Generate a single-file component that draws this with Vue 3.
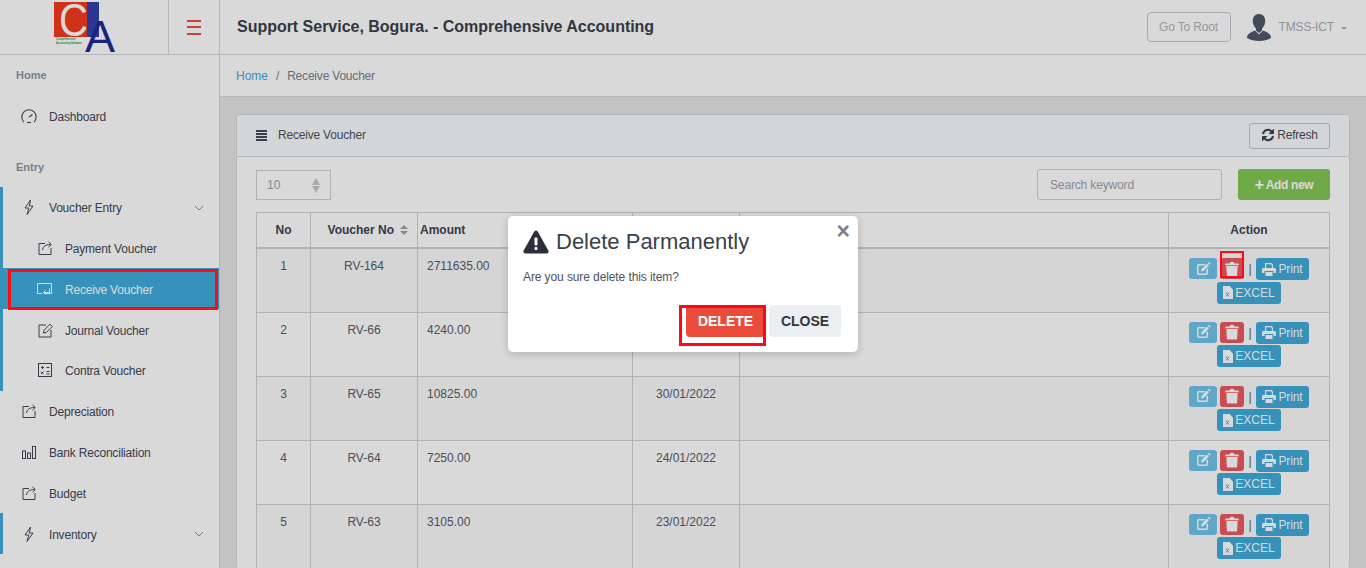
<script setup>
const menu = [
  { label: 'Voucher Entry', icon: 'bolt', parent: true, bar: true, chevron: true },
  { label: 'Payment Voucher', icon: 'share', sub: true, bar: true },
  { label: 'Receive Voucher', icon: 'reply', sub: true, bar: true, active: true },
  { label: 'Journal Voucher', icon: 'edit', sub: true, bar: true },
  { label: 'Contra Voucher', icon: 'calc', sub: true, bar: true },
  { label: 'Depreciation', icon: 'share' },
  { label: 'Bank Reconciliation', icon: 'bars' },
  { label: 'Budget', icon: 'share' },
  { label: 'Inventory', icon: 'bolt', bar: true, chevron: true }
]
const rows = [
  { no: 1, voucher: 'RV-164', amount: '2711635.00', date: '' },
  { no: 2, voucher: 'RV-66', amount: '4240.00', date: '' },
  { no: 3, voucher: 'RV-65', amount: '10825.00', date: '30/01/2022' },
  { no: 4, voucher: 'RV-64', amount: '7250.00', date: '24/01/2022' },
  { no: 5, voucher: 'RV-63', amount: '3105.00', date: '23/01/2022' }
]
</script>

<template>
  <div class="app">
    <header class="topbar">
      <div class="logo-cell">
        <svg class="logo" width="64" height="54" viewBox="0 0 64 54">
          <rect x="0" y="2" width="34" height="35" fill="#f63a1c" />
          <rect x="33" y="2" width="12" height="35" fill="#3640aa" />
          <text x="5" y="36" font-family="Liberation Sans" font-size="46" textLength="29" lengthAdjust="spacingAndGlyphs" fill="#fff">C</text>
          <text x="31" y="52" font-family="Liberation Sans" font-size="45" fill="#1f2b96">A</text>
          <text x="2" y="40" font-family="Liberation Sans" font-size="2.600" font-weight="700" fill="#1f9a45">Comprehensive</text>
          <text x="2" y="44" font-family="Liberation Sans" font-size="2.600" font-weight="700" fill="#1f9a45">Accounting Software</text>
        </svg>
      </div>
      <div class="burger-cell">
        <span class="burger"><i></i><i></i><i></i></span>
      </div>
      <h1 class="title">Support Service, Bogura. - Comprehensive Accounting</h1>
      <div class="top-right">
        <button class="root-btn">Go To Root</button>
        <svg class="avatar" width="24" height="28" viewBox="0 0 24 28">
          <path d="M12 1c4 0 6.200 3 6.200 7 0 3-1.300 6-3.200 7.500v2L12 20l-3-2.500v-2C7.100 14 5.800 11 5.800 8 5.800 4 8 1 12 1z" fill="#4f5868" />
          <path d="M0 25c0-4 4-6 8-7.500l4 4 4-4c4 1.500 8 3.500 8 7.500-3 2-7.500 3-12 3s-9-1-12-3z" fill="#4f5868" />
        </svg>
        <span class="user">TMSS-ICT</span>
        <span class="caret"></span>
      </div>
    </header>

    <div class="body">
      <aside class="sidebar">
        <div class="side-label">Home</div>
        <div class="side-item">
          <svg class="ico" width="18" height="18" viewBox="0 0 18 18" fill="none" stroke="#454c5c" stroke-width="1.100">
            <path d="M4 15.200A7.200 7.200 0 1 1 14 15.200" />
            <path d="M9 10l3.500-2.600" stroke-width="1.300" />
            <path d="M7 15.500h4" />
          </svg>
          <span class="side-text">Dashboard</span>
        </div>
        <div class="side-label entry">Entry</div>
        <div
          v-for="m in menu"
          :key="m.label"
          class="side-item"
          :class="{ sub: m.sub, bar: m.bar, active: m.active }"
        >
          <svg class="ico" width="18" height="18" viewBox="0 0 18 18" fill="none" stroke="currentColor" stroke-width="1">
            <template v-if="m.icon === 'bolt'">
              <path d="M10.500 2L5 10h3.800L7 16.500 13 8H9.300z" />
            </template>
            <template v-else-if="m.icon === 'share'">
              <path d="M9 4.500H3v11h12V9" />
              <path d="M6.500 11c.5-3.500 3-5.500 8-5.500M12.500 2.800l2.800 2.700-2.800 2.700" />
            </template>
            <template v-else-if="m.icon === 'reply'">
              <path d="M6 13.500H1.500V3.500h14v10H9" />
              <path d="M13.500 8.500v4H7.500M9.500 10.500l-2 2 2 2" />
            </template>
            <template v-else-if="m.icon === 'edit'">
              <path d="M10 4H3v12h12V9" />
              <path d="M7.500 12l.5-2.800 6-6 2.300 2.300-6 6z" />
            </template>
            <template v-else-if="m.icon === 'calc'">
              <rect x="2.500" y="2.500" width="13" height="13" />
              <path d="M5 6.500h3M6.500 5v3M10.500 6.500h3M5 10.500l2.500 2.500M7.500 10.500L5 13M10.500 10.500h3M10.500 13h3" />
            </template>
            <template v-else>
              <rect x="2.500" y="8" width="3" height="7.500" />
              <rect x="7.500" y="10" width="3" height="5.500" />
              <rect x="12.500" y="3.500" width="3" height="12" />
            </template>
          </svg>
          <span class="side-text">{{ m.label }}</span>
          <svg v-if="m.chevron" class="chev" width="10" height="6" viewBox="0 0 10 6" fill="none" stroke="#8b8f96" stroke-width="1">
            <path d="M1 1l4 4 4-4" />
          </svg>
        </div>
      </aside>

      <main class="main">
        <div class="crumbs">
          <span class="crumb-link">Home</span>
          <span class="crumb-sep">/</span>
          <span>Receive Voucher</span>
        </div>
        <section class="card">
          <div class="card-head">
            <span class="list-ico"><i></i><i></i><i></i><i></i></span>
            <span class="card-title">Receive Voucher</span>
            <button class="refresh">
              <svg width="14" height="14" viewBox="0 0 14 14" fill="none" stroke="#3d4350" stroke-width="2">
                <path d="M2 6a5 5 0 0 1 9-2" />
                <path d="M12 8a5 5 0 0 1-9 2" />
                <path d="M12.500 1v4.500H8M1.500 13V8.500H6" fill="#3d4350" stroke-width="1" />
              </svg>
              Refresh
            </button>
          </div>
          <div class="card-body">
            <div class="toolbar">
              <div class="select">
                <span>10</span>
                <span class="spin"></span>
              </div>
              <div class="search">Search keyword</div>
              <button class="add"><b class="plus">+</b>Add new</button>
            </div>
            <table class="grid">
              <colgroup>
                <col class="c1" /><col class="c2" /><col class="c3" /><col class="c4" /><col /><col class="c6" />
              </colgroup>
              <thead>
                <tr>
                  <th>No</th>
                  <th class="vno">Voucher No <span class="sort"></span></th>
                  <th class="left">Amount</th>
                  <th></th>
                  <th></th>
                  <th>Action</th>
                </tr>
              </thead>
              <tbody>
                <tr v-for="r in rows" :key="r.no">
                  <td>{{ r.no }}</td>
                  <td>{{ r.voucher }}</td>
                  <td class="amount">{{ r.amount }}</td>
                  <td>{{ r.date }}</td>
                  <td></td>
                  <td class="actions">
                    <div class="act-line">
                      <span class="btn edit">
                        <svg width="15" height="14" viewBox="0 0 15 14">
                          <path d="M3 2h6.500L8 3.500H3.200c-.5 0-.7.200-.7.700v6.600c0 .5.200.7.700.7h6.600c.5 0 .7-.2.700-.7V7.500L12 6v5c0 1.300-.7 2-2 2H3c-1.300 0-2-.7-2-2V4c0-1.300.7-2 2-2z" fill="#fff" />
                          <path d="M5 9.500l.6-2.600 5.400-5.400 2 2-5.400 5.400zM11.700.8l.8-.6c.3-.2.6-.2.8 0l1 1c.2.2.2.500 0 .8l-.6.800z" fill="#fff" />
                        </svg>
                      </span>
                      <span class="btn del">
                        <svg width="14" height="16" viewBox="0 0 14 16">
                          <path d="M1 2.500h3.500l.7-1.500h3.600l.7 1.500H13c.5 0 .8.300.8.800v.9H.2v-.9c0-.5.300-.8.800-.8z" fill="#fff" />
                          <path d="M1.300 5h11.400l-.6 9.200c0 .9-.5 1.300-1.300 1.300H3.200c-.8 0-1.300-.4-1.300-1.300z" fill="#fff" />
                        </svg>
                      </span>
                      <span class="pipe">|</span>
                      <span class="btn print">
                        <svg width="14" height="13" viewBox="0 0 14 13">
                          <path d="M3 0h6.500L11 1.500V5H9.800V2.300L9 1.200H4.200V5H3z" fill="#fff" />
                          <path d="M1.500 5h11c.9 0 1.500.6 1.500 1.500V10h-2.500V8h-9v2H0V6.500C0 5.600.6 5 1.500 5zM3.500 9h7v4h-7z" fill="#fff" />
                        </svg>
                        Print
                      </span>
                    </div>
                    <div class="act-line second">
                      <span class="btn excel">
                        <svg width="10" height="13" viewBox="0 0 10 13">
                          <path d="M0 0h6.500L10 3.500V13H0z" fill="#fff" />
                          <path d="M3 6.500l3 4M6 6.500l-3 4" stroke="#41acdc" stroke-width="1" />
                        </svg>
                        EXCEL
                      </span>
                    </div>
                  </td>
                </tr>
              </tbody>
            </table>
          </div>
        </section>
      </main>
    </div>

    <div class="scrim"></div>

    <div class="modal">
      <span class="close-x">×</span>
      <div class="modal-title">
        <svg width="26" height="24" viewBox="0 0 26 24">
          <path d="M11.300 1.500c.8-1.400 2.600-1.400 3.400 0l10.600 19c.8 1.400-.1 3-1.700 3H2.400c-1.600 0-2.500-1.600-1.700-3z" fill="#2b2f3b" />
          <rect x="11.500" y="7.500" width="3" height="8" rx="1" fill="#fff" />
          <rect x="11.500" y="17" width="3" height="3" rx="1" fill="#fff" />
        </svg>
        <span>Delete Parmanently</span>
      </div>
      <p class="modal-text">Are you sure delete this item?</p>
      <div class="modal-actions">
        <button class="m-del">DELETE</button>
        <button class="m-close">CLOSE</button>
      </div>
    </div>

    <div class="mark mark-side"></div>
    <div class="mark mark-trash"></div>
    <div class="mark mark-del"></div>
  </div>
</template>

<style>
html, body { margin: 0; height: 100%; overflow: hidden; }
</style>

<style scoped>
.app {
  position: relative;
  width: 1366px;
  height: 568px;
  overflow: hidden;
  font-family: "Liberation Sans", Arial, sans-serif;
  font-size: 12px;
  color: #404654;
  background: #e5e6e7;
}
button { font-family: inherit; cursor: pointer; }

.topbar {
  display: flex;
  align-items: stretch;
  height: 54px;
  background: #fff;
  border-bottom: 1px solid #d8d8d8;
}
.logo-cell {
  box-sizing: content-box;
  width: 114px;
  padding-left: 54px;
  border-right: 1px solid #d8d8d8;
}
.logo { display: block; overflow: visible; }
.burger-cell {
  width: 50px;
  border-right: 1px solid #d8d8d8;
  display: flex;
  align-items: center;
  justify-content: center;
}
.burger { display: flex; flex-direction: column; gap: 4.500px; width: 14px; }
.burger i { display: block; height: 2px; background: #f04a44; }
.title {
  margin: 0 0 0 17px;
  font-size: 16px;
  font-weight: 700;
  line-height: 54px;
  letter-spacing: -0.02px;
  color: #3a3f4c;
}
.top-right { margin-left: auto; display: flex; align-items: center; padding-right: 19px; }
.root-btn {
  width: 84px;
  height: 30px;
  padding: 0;
  background: transparent;
  border: 1px solid #c5c7cb;
  border-radius: 4px;
  color: #b0b3b8;
  font-size: 12px;
  letter-spacing: -0.15px;
}
.avatar { margin-left: 16px; }
.user { margin-left: 8px; color: #a9adb5; font-size: 12px; letter-spacing: -0.15px; }
.caret {
  margin-left: 7px;
  margin-top: 2px;
  border-left: 3.500px solid transparent;
  border-right: 3.500px solid transparent;
  border-top: 3.500px solid #a9adb5;
}

.body { display: flex; height: 514px; }
.sidebar {
  width: 219px;
  flex: none;
  background: #fff;
  border-right: 1px solid #d5d6d8;
  overflow: hidden;
}
.side-label {
  height: 41px;
  line-height: 41px;
  padding-left: 16px;
  font-size: 11px;
  font-weight: 700;
  color: #8d95a3;
}
.side-label.entry { height: 40px; line-height: 40px; margin-top: 10px; }
.side-item {
  position: relative;
  display: flex;
  align-items: center;
  height: 40.800px;
  padding-left: 20px;
  color: #434858;
}
.side-text { padding-top: 2px; letter-spacing: -0.2px; }
.side-item.sub { padding-left: 36px; }
.side-item.bar { box-shadow: inset 3px 0 0 #41acdc; }
.side-item.active { background: #41acdc; color: #fff; }
.ico { flex: none; margin-right: 11px; }
.chev { position: absolute; right: 15px; top: 18px; }

.main { flex: 1; min-width: 0; }
.crumbs {
  display: flex;
  align-items: center;
  height: 41px;
  padding-left: 16px;
  background: #fff;
  border-bottom: 1px solid #d8d8d8;
  color: #79808c;
  letter-spacing: -0.2px;
}
.crumb-link { color: #41acdc; letter-spacing: 0; }
.crumb-sep { margin: 0 8px; }

.card {
  margin: 17px 16px 0;
  background: #fff;
  border: 1px solid #d8d9db;
  border-radius: 4px;
}
.card-head {
  display: flex;
  align-items: center;
  height: 41px;
  padding: 0 19px;
  background: #fafbfc;
  border-bottom: 1px solid #d8d9db;
  border-radius: 4px 4px 0 0;
}
.list-ico { display: flex; flex-direction: column; gap: 1px; width: 11px; }
.list-ico i { display: block; height: 2px; background: #454b58; }
.card-title { margin-left: 11px; padding-bottom: 2px; color: #4d5360; letter-spacing: -0.2px; }
.refresh {
  margin-left: auto;
  display: flex;
  align-items: center;
  justify-content: center;
  gap: 2px;
  width: 81px;
  height: 26px;
  padding: 0 0 2px;
  background: transparent;
  border: 1px solid #c2c4c8;
  border-radius: 3px;
  color: #454b58;
  font-size: 12px;
  letter-spacing: -0.2px;
}
.card-body { padding: 12px 19px 0; }
.toolbar { display: flex; align-items: flex-end; height: 31px; margin-bottom: 12px; }
.select {
  display: flex;
  align-items: center;
  justify-content: space-between;
  box-sizing: border-box;
  width: 75px;
  height: 30px;
  padding: 0 10px;
  border: 1px solid #cdd0d4;
  color: #9ea3ab;
}
.spin {
  position: relative;
  width: 8px;
  height: 15px;
}
.spin::before, .spin::after {
  content: "";
  position: absolute;
  left: 0;
  border-left: 4px solid transparent;
  border-right: 4px solid transparent;
}
.spin::before { top: 0; border-bottom: 7px solid #c4c7cc; }
.spin::after { bottom: 0; border-top: 7px solid #c4c7cc; }
.search {
  box-sizing: border-box;
  width: 185px;
  height: 31px;
  margin-left: auto;
  padding-left: 12px;
  line-height: 31px;
  border: 1px solid #cdd0d4;
  border-radius: 3px;
  color: #9ea3ab;
  letter-spacing: -0.15px;
}
.add {
  width: 92px;
  height: 31px;
  margin-left: 16px;
  padding: 0;
  border: 0;
  border-radius: 3px;
  background: #83c755;
  color: #fff;
  font-size: 12px;
  font-weight: 700;
  letter-spacing: -0.35px;
}
.plus { font-size: 16px; line-height: 12px; vertical-align: -1px; margin-right: 2px; }

.grid {
  width: 1074px;
  table-layout: fixed;
  border-collapse: collapse;
}
.c1 { width: 54px; }
.c2 { width: 107px; }
.c3 { width: 215px; }
.c4 { width: 107px; }
.c6 { width: 161px; }
.grid th {
  height: 34px;
  padding: 0 2px;
  font-size: 12px;
  font-weight: 700;
  color: #3e4451;
  text-align: center;
  border: 1px solid #d0d2d6;
  border-bottom-width: 2px;
}
.grid th.left { text-align: left; }
.grid th.vno { padding-left: 10px; }
.sort {
  position: relative;
  display: inline-block;
  width: 8px;
  height: 10px;
  margin-left: 3px;
  vertical-align: -1px;
}
.sort::before, .sort::after {
  content: "";
  position: absolute;
  left: 0;
  border-left: 4px solid transparent;
  border-right: 4px solid transparent;
}
.sort::before { top: 0; border-bottom: 4px solid #9ea3ab; }
.sort::after { bottom: 0; border-top: 4px solid #9ea3ab; }
.grid tbody tr:nth-child(odd) { background: #fbfbfc; }
.grid td {
  height: 64px;
  box-sizing: border-box;
  padding: 8px 9px 0;
  vertical-align: top;
  text-align: center;
  line-height: 18px;
  color: #565c68;
  border: 1px solid #d0d2d6;
}
.grid td.amount { text-align: left; }
.grid td.actions { padding: 9px 0 0; }
.act-line { display: flex; justify-content: center; align-items: flex-start; height: 23.500px; }
.btn {
  display: inline-flex;
  align-items: center;
  justify-content: center;
  box-sizing: border-box;
  height: 22px;
  border-radius: 3px;
  color: #fff;
  font-size: 12px;
  gap: 2px;
}
.edit { width: 28px; height: 21px; background: #70c5ec; }
.del { width: 24px; height: 21px; margin-left: 3px; background: #ee5a5e; }
.pipe { width: 12px; text-align: center; line-height: 22px; color: #565c68; }
.print { width: 53px; background: #41acdc; letter-spacing: -0.1px; }
.excel { width: 64px; background: #41acdc; }

.scrim {
  position: absolute;
  inset: 0;
  background: rgba(0, 0, 0, 0.15);
}

.modal {
  position: absolute;
  left: 508px;
  top: 216px;
  box-sizing: border-box;
  width: 350px;
  height: 136px;
  padding: 13px 15px 12px;
  background: #fff;
  border-radius: 5px;
  box-shadow: 0 2px 8px rgba(0, 0, 0, 0.18);
}
.close-x {
  position: absolute;
  right: 8px;
  top: 3px;
  font-size: 23px;
  line-height: 24px;
  color: #7c8087;
  font-weight: 700;
}
.modal-title {
  display: flex;
  align-items: center;
  gap: 7px;
  height: 26px;
  font-size: 22px;
  color: #3a3f4c;
}
.modal-text {
  margin: 15px 0 0;
  font-size: 12px;
  line-height: 14px;
  letter-spacing: -0.1px;
  color: #4c5160;
}
.modal-actions {
  display: flex;
  justify-content: flex-end;
  gap: 4px;
  margin: 21px 2px 0 0;
}
.m-del, .m-close {
  height: 32px;
  padding: 0;
  border: 0;
  border-radius: 4px;
  font-size: 14px;
  font-weight: 700;
}
.m-del { width: 79px; background: #ea4c3c; color: #fff; }
.m-close { width: 72px; background: #eceff1; color: #32363f; }

.mark {
  position: absolute;
  box-sizing: border-box;
  border: 3px solid #ff0a14;
  pointer-events: none;
}
.mark-side { left: 8px; top: 269px; width: 210px; height: 41px; }
.mark-trash { left: 1220px; top: 251px; width: 24px; height: 27px; border-width: 2px; }
.mark-trash::before {
  content: "";
  position: absolute;
  left: 1px;
  right: 1px;
  top: 0;
  height: 3px;
  background: #d9d9d9;
}
.mark-del { left: 679px; top: 305px; width: 87px; height: 41px; }
</style>
